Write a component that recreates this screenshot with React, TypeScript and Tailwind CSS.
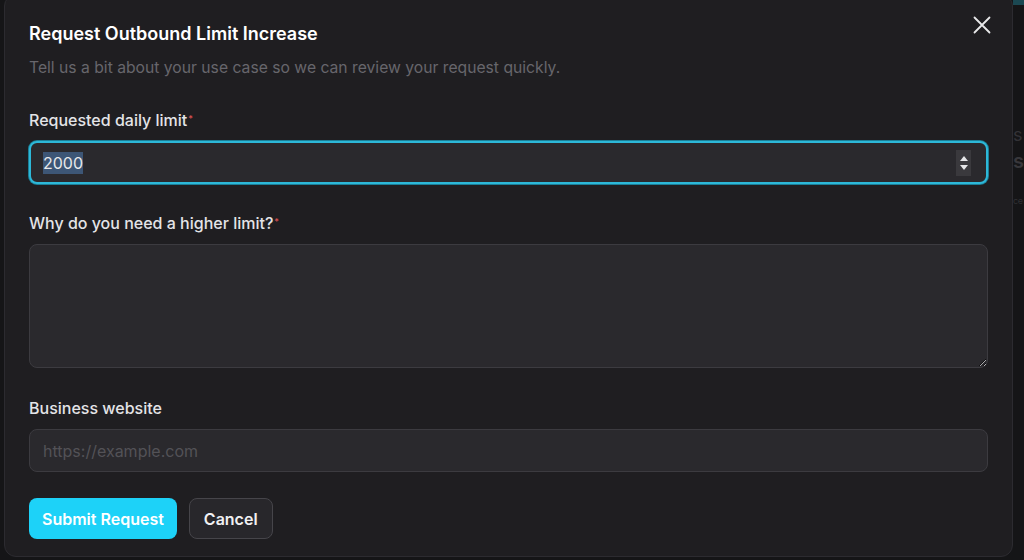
import { useState } from 'react';

function Label({ text, required }: { text: string; required?: boolean }) {
  return (
    <label className="block text-[16px] font-medium leading-[22px] text-[#e4e4e7]">
      {text}
      {required && <sup className="ml-px text-[9px] text-[#e05252]">*</sup>}
    </label>
  );
}

function CloseIcon() {
  return (
    <svg width="18" height="18" viewBox="0 0 18 18" fill="none" stroke="currentColor" strokeWidth="1.8" strokeLinecap="round">
      <path d="M1.5 1.5l15 15M16.5 1.5l-15 15" />
    </svg>
  );
}

export default function App() {
  const [reason, setReason] = useState('');
  const [website, setWebsite] = useState('');

  return (
    <div className="flex h-[560px] w-full overflow-hidden bg-[#151517] font-['Inter','Liberation_Sans',sans-serif]">
      <div className="ml-[4px] mt-[-6px] h-[563px] w-[1009px] shrink-0 rounded-xl border border-[#2c2b30] bg-[#1f1e21] px-6 pt-[27px]">
        <div className="flex items-start justify-between">
          <div>
            <h2 className="text-[18px] font-semibold leading-6 text-white">Request Outbound Limit Increase</h2>
            <p className="mt-[11px] text-[15.7px] leading-[22px] text-[#67666c]">
              Tell us a bit about your use case so we can review your request quickly.
            </p>
          </div>
          <button className="mr-[-3px] mt-[-6px] text-[#e8e8ea]">
            <CloseIcon />
          </button>
        </div>

        <div className="mt-[30px]">
          <Label text="Requested daily limit" required />
          <div className="mt-[10px] flex h-[43px] items-center justify-between rounded-lg border-2 border-[#2db8d8] bg-[#2a292d] pl-[12px] pr-[15px] shadow-[0_0_0_1px_#1b7f97]">
            <span className="bg-[#3d5676] text-[16px] leading-[22px] text-[#e8e8ea]">2000</span>
            <div className="flex h-[26px] w-[15px] flex-col items-center justify-center gap-[4px] bg-[#3a393d]">
              <span className="h-0 w-0 border-x-[4px] border-b-[5px] border-x-transparent border-b-[#e5e5e7]" />
              <span className="h-0 w-0 border-x-[4px] border-t-[5px] border-x-transparent border-t-[#e5e5e7]" />
            </div>
          </div>
        </div>

        <div className="mt-[28px]">
          <Label text="Why do you need a higher limit?" required />
          <textarea
            value={reason}
            onChange={(e) => setReason(e.target.value)}
            className="mt-[10px] block h-[124px] w-full resize-y rounded-lg border border-[#3c3b40] bg-[#2a292d] px-[14px] py-[10px] text-[16px] text-[#e8e8ea] outline-none [color-scheme:dark]"
          />
        </div>

        <div className="mt-[29px]">
          <Label text="Business website" />
          <input
            type="text"
            value={website}
            onChange={(e) => setWebsite(e.target.value)}
            placeholder="https://example.com"
            className="mt-[10px] block h-[43px] w-full rounded-lg border border-[#3c3b40] bg-[#2a292d] px-[13px] text-[16px] text-[#e8e8ea] outline-none placeholder:text-[#535257]"
          />
        </div>

        <div className="mt-[26px] flex gap-3">
          <button className="h-[41px] rounded-lg bg-[#1dd2f8] px-[13px] text-[16px] font-semibold text-white">
            Submit Request
          </button>
          <button className="h-[41px] rounded-lg border border-[#46454a] bg-[#28272b] px-[14px] text-[16px] font-semibold text-[#f0f0f2]">
            Cancel
          </button>
        </div>
      </div>

      <div className="flex flex-1 flex-col overflow-hidden">
        <div className="h-[5px] w-full bg-[#1b4852]" />
        <div className="mt-[118px] text-[18px] leading-6 text-[#333236]">s</div>
        <div className="text-[20px] font-semibold leading-7 text-[#38373b]">s</div>
        <div className="mt-[14px] text-[9px] leading-6 tracking-tighter text-[#303033]">ce</div>
      </div>
    </div>
  );
}
